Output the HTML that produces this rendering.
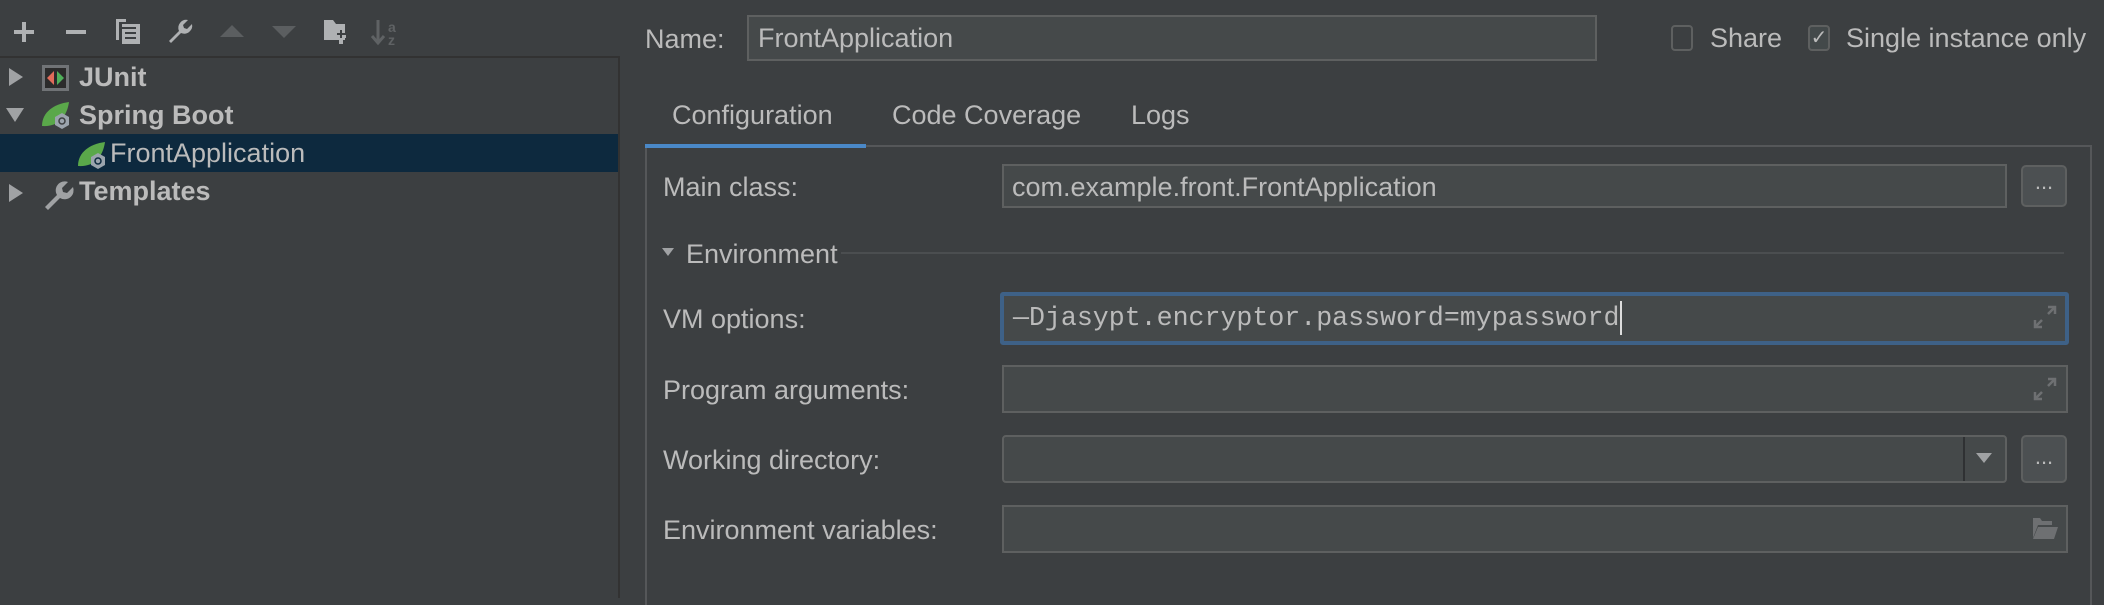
<!DOCTYPE html>
<html><head><meta charset="utf-8"><style>
*{margin:0;padding:0;box-sizing:border-box}
body{width:2104px;height:598px;background:#3c3f41;font-family:"Liberation Sans",sans-serif;color:#bbbbbb;position:relative;overflow:hidden}
.a{position:absolute}
.t{position:absolute;font-size:27px;line-height:30px;white-space:nowrap}
.f{position:absolute;background:#45494a;border:2px solid #5e6060}
.b{font-weight:bold;font-size:27px}
.btn{position:absolute;border:2px solid #5e6060;border-radius:5px;background:#4c5052;font-size:22px;text-align:center;line-height:30px;color:#bbb}
</style></head><body>
<!-- toolbar -->
<svg class="a" style="left:0;top:0" width="620" height="60">
<g fill="#afb1b3">
<rect x="14" y="30" width="20" height="4"/><rect x="22" y="22" width="4" height="20"/>
<rect x="66" y="30" width="20" height="4"/>
<path d="M116 19h10v3h-7v18h-3z"/><rect x="122" y="24" width="18" height="20"/>
<path d="M169 41l10-10a8 8 0 0 1 9-11l-5 5 1 3 3 1 5-5a8 8 0 0 1-11 9l-10 10z"/>
<path d="M324 20h9l3 4h9v16h-21z"/><rect x="336" y="35" width="10" height="3"/><rect x="339" y="32" width="4" height="12"/>
</g>
<rect x="119" y="27" width="17" height="2" fill="#3c3f41"/><rect x="125" y="32" width="11" height="2" fill="#3c3f41"/><rect x="125" y="37" width="11" height="2" fill="#3c3f41"/>
<path d="M220 37l12-12 12 12z" fill="#5b5e60"/>
<path d="M272 26h24l-12 12z" fill="#5b5e60"/>
<path d="M337 33h3v-3h2v3h3v2h-3v3h-2v-3h-3z" fill="#3c3f41"/>
<path d="M378 20v22M372 36l6 7 6-7" stroke="#5f6264" stroke-width="3" fill="none"/>
<text x="388" y="32" font-size="14" font-weight="bold" fill="#5f6264" font-family="Liberation Sans">a</text>
<text x="388" y="45" font-size="14" font-weight="bold" fill="#5f6264" font-family="Liberation Sans">z</text>
<rect x="0" y="56" width="620" height="2" fill="#323232"/>
</svg>
<div class="a" style="top:58px;left:618px;width:2px;height:540px;background:#323232"></div>
<!-- tree -->
<div class="a" style="left:0;top:134px;width:618px;height:38px;background:#0d293e"></div>
<svg class="a" style="left:0;top:0" width="620" height="220">
<path d="M9 68l14 9-14 9z" fill="#a0a2a4"/>
<path d="M6 108h18l-9 14z" fill="#a0a2a4"/>
<path d="M9 184l14 9-14 9z" fill="#a0a2a4"/>
<rect x="42" y="65" width="27" height="26" fill="#707376"/><rect x="45" y="68" width="21" height="20" fill="#2b2b2b"/>
<path d="M47 78l7-7v14z" fill="#e06c5a"/><path d="M64 78l-7-7v14z" fill="#4fb05a"/>
<path d="M42 126c0-14 12-22 27-24-2 14-10 25-27 24z" fill="#5aa84a"/>
<path d="M62 113l7 4v8l-7 4-7-4v-8z" fill="#9ba4ad"/><circle cx="62" cy="121" r="3" stroke="#3c3f41" stroke-width="1.5" fill="none"/>
<path d="M78 166c0-14 12-22 27-24-2 14-10 25-27 24z" fill="#5aa84a"/>
<path d="M98 153l7 4v8l-7 4-7-4v-8z" fill="#9ba4ad"/><circle cx="98" cy="161" r="3" stroke="#0d293e" stroke-width="1.5" fill="none"/>
<path d="M45 207l12-12a9 9 0 0 1 11-13l-6 6 1 4 4 1 6-6a9 9 0 0 1-13 11l-12 12z" fill="#a0a2a4"/>
</svg>
<div class="t b" style="left:79px;top:62px">JUnit</div>
<div class="t b" style="left:79px;top:100px">Spring Boot</div>
<div class="t" style="left:110px;top:138px">FrontApplication</div>
<div class="t b" style="left:79px;top:176px">Templates</div>
<!-- name row -->
<div class="t" style="left:645px;top:24px">Name:</div>
<div class="f" style="left:747px;top:15px;width:850px;height:46px"></div>
<div class="t" style="left:758px;top:23px">FrontApplication</div>
<div class="a" style="left:1671px;top:25px;width:22px;height:26px;border:2px solid #5e6060;border-radius:4px;background:#3c3f41"></div>
<div class="t" style="left:1710px;top:23px">Share</div>
<div class="a" style="left:1808px;top:25px;width:22px;height:26px;border:2px solid #5e6060;border-radius:4px;background:#43494a;text-align:center;font-size:20px;line-height:22px">✓</div>
<div class="t" style="left:1846px;top:23px">Single instance only</div>
<!-- tabs -->
<div class="t" style="left:672px;top:100px">Configuration</div>
<div class="t" style="left:892px;top:100px">Code Coverage</div>
<div class="t" style="left:1131px;top:100px">Logs</div>
<div class="a" style="left:645px;top:145px;width:1447px;height:460px;border:2px solid #555759;border-bottom:none"></div>
<div class="a" style="left:645px;top:144px;width:221px;height:4px;background:#4a88c7"></div>
<!-- content -->
<div class="t" style="left:663px;top:172px">Main class:</div>
<div class="f" style="left:1002px;top:164px;width:1005px;height:44px"></div>
<div class="t" style="left:1012px;top:172px">com.example.front.FrontApplication</div>
<div class="btn" style="left:2021px;top:165px;width:46px;height:42px">...</div>
<svg class="a" style="left:660px;top:246px" width="20" height="14"><path d="M2 2h12l-6 8z" fill="#a0a2a4"/></svg>
<div class="t" style="left:686px;top:239px">Environment</div>
<div class="a" style="left:841px;top:252px;width:1223px;height:2px;background:#4b4e50"></div>
<div class="t" style="left:663px;top:304px">VM options:</div>
<div class="f" style="left:1000px;top:292px;width:1069px;height:53px;border:4px solid #3e6187;border-radius:3px"></div>
<div class="t" style="left:1013px;top:303px;font-family:'Liberation Mono',monospace;font-size:26.6px;line-height:30px">—Djasypt.encryptor.password=mypassword</div>
<div class="a" style="left:1620px;top:301px;width:2px;height:34px;background:#ddd"></div>
<svg class="a" style="left:2030px;top:302px" width="30" height="30"><path d="M12 18l-7 7M5 18v7h7M18 12l7-7M18 5h7v7" stroke="#6e7072" stroke-width="2.5" fill="none"/></svg>
<div class="t" style="left:663px;top:375px">Program arguments:</div>
<div class="f" style="left:1002px;top:365px;width:1066px;height:48px"></div>
<svg class="a" style="left:2030px;top:374px" width="30" height="30"><path d="M12 18l-7 7M5 18v7h7M18 12l7-7M18 5h7v7" stroke="#6e7072" stroke-width="2.5" fill="none"/></svg>
<div class="t" style="left:663px;top:445px">Working directory:</div>
<div class="f" style="left:1002px;top:435px;width:1005px;height:48px;border-radius:4px"></div>
<div class="a" style="left:1963px;top:437px;width:2px;height:44px;background:#2f3133"></div>
<svg class="a" style="left:1973px;top:450px" width="24" height="16"><path d="M3 3h16l-8 10z" fill="#a0a2a4"/></svg>
<div class="btn" style="left:2021px;top:435px;width:46px;height:48px;line-height:40px">...</div>
<div class="t" style="left:663px;top:515px">Environment variables:</div>
<div class="f" style="left:1002px;top:505px;width:1066px;height:48px"></div>
<svg class="a" style="left:2030px;top:516px" width="30" height="26"><path d="M3 2h7l2 3h10v4H8l-5 13z" fill="#6e7072"/><path d="M8 11h20l-4 12H3z" fill="#6e7072"/></svg>
</body></html>
